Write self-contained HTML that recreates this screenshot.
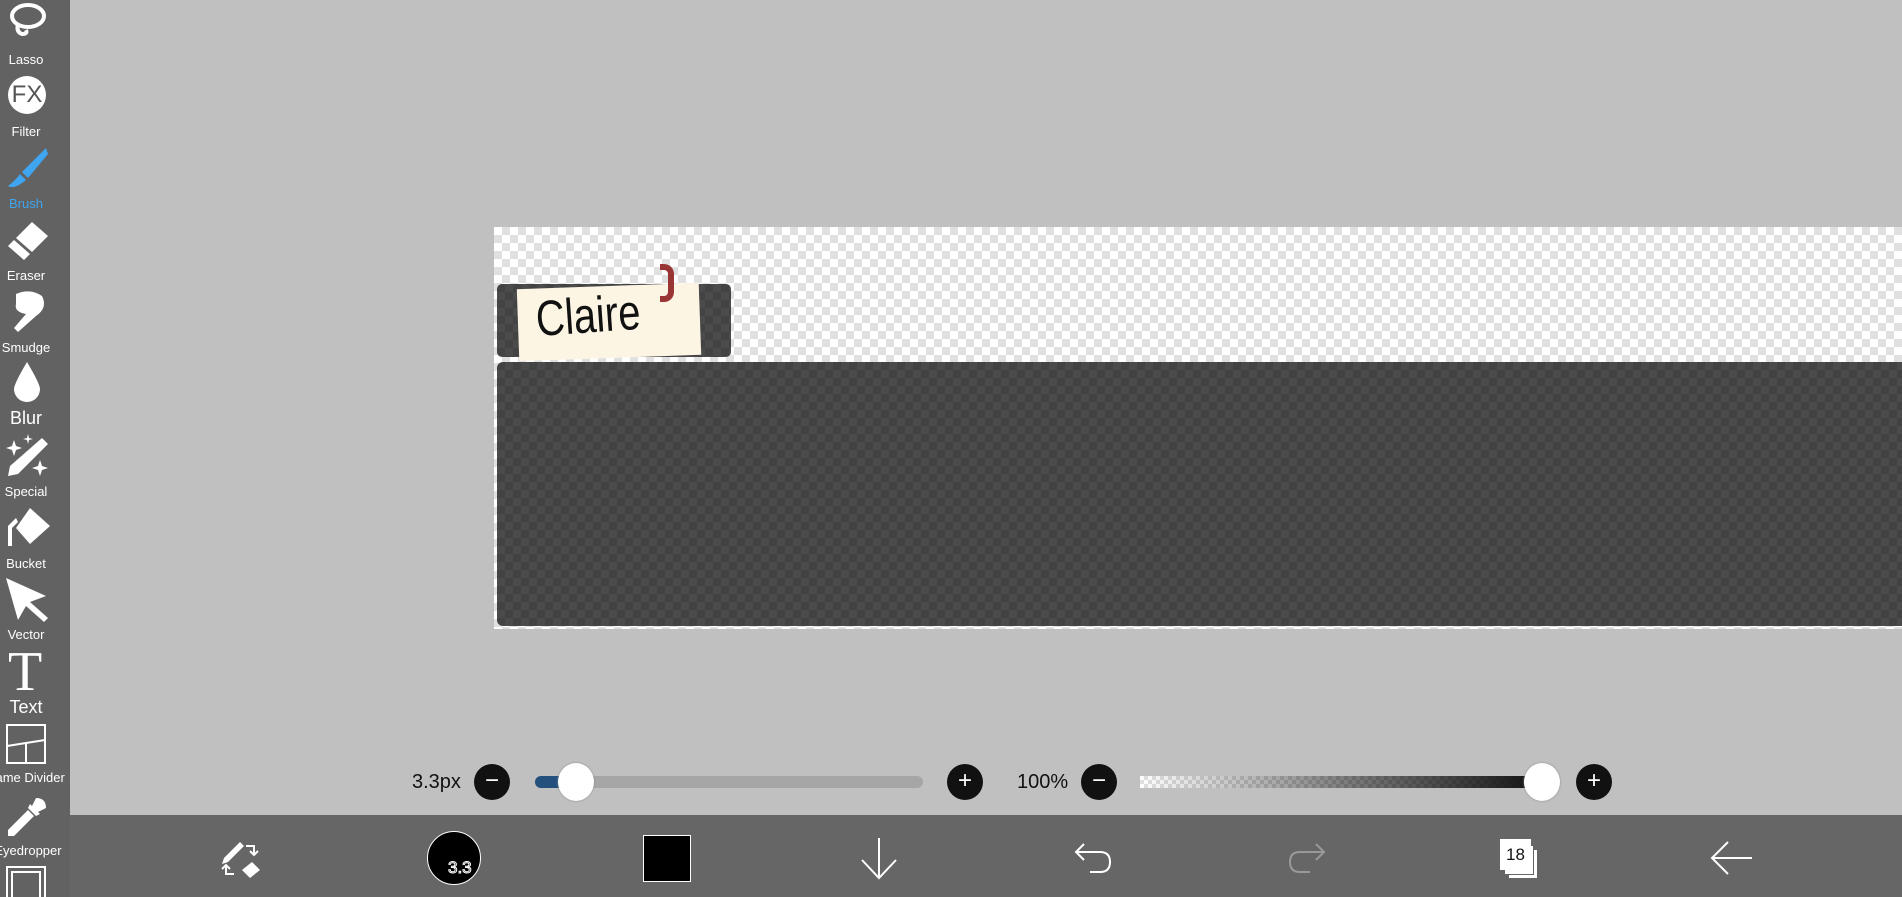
<!DOCTYPE html>
<html style="width:1902px;height:897px;overflow:hidden"><head><meta charset="utf-8"><style>
*{margin:0;padding:0;box-sizing:border-box}
body{width:1902px;height:897px;background:#c0c0c0;position:relative;overflow:hidden;font-family:"Liberation Sans",sans-serif}
.a{position:absolute}
#side{left:0;top:0;width:70px;height:897px;background:#626262;overflow:hidden}
.lbl{position:absolute;left:-19px;width:90px;text-align:center;color:#fff;font-size:13px;white-space:nowrap}
.chk{background-color:#fff;background-image:linear-gradient(45deg,#e0e0e0 25%,transparent 25%,transparent 75%,#e0e0e0 75%),linear-gradient(45deg,#e0e0e0 25%,transparent 25%,transparent 75%,#e0e0e0 75%);background-size:16px 16px;background-position:0 0,8px 8px}
.dk{background-color:#434343;background-image:linear-gradient(45deg,#4b4b4b 25%,transparent 25%,transparent 75%,#4b4b4b 75%),linear-gradient(45deg,#4b4b4b 25%,transparent 25%,transparent 75%,#4b4b4b 75%);background-size:16px 16px;background-position:0 0,8px 8px}
.btn{position:absolute;width:36px;height:36px;border-radius:50%;background:#111;color:#fff;text-align:center;line-height:34px;font-size:24px;top:764px}
.thumb{position:absolute;width:36px;height:38px;border-radius:50%;background:#fff;top:763px;box-shadow:0 0 2px #888}
.num{position:absolute;top:771px;font-size:20px;color:#111}
</style></head><body>
<div class="a chk" style="left:494px;top:227px;width:1408px;height:402px"></div>
<div class="a dk" style="left:497px;top:362px;width:1405px;height:264px;border-radius:6px 0 0 6px"></div>
<div class="a dk" style="left:497px;top:284px;width:234px;height:73px;border-radius:5px"></div>
<div class="a" style="left:518px;top:286px;width:182px;height:72px;background:#fdf5e4;transform:rotate(-2deg)"></div>
<div class="a" style="left:536px;top:290px;font-family:'Liberation Sans',sans-serif;font-size:50px;color:#111;transform:rotate(-4deg) scaleX(0.8);transform-origin:left center">Claire</div>
<div class="a" style="left:660px;top:264px;width:14px;height:38px;border:6px solid #9a3535;border-left:none;border-radius:0 10px 10px 0"></div>

<div class="a" id="side">
<svg class="a" style="left:6px;top:2px" width="40" height="36" viewBox="0 0 40 36"><ellipse cx="22" cy="14" rx="16" ry="11" fill="none" stroke="#fff" stroke-width="4"/><path d="M12 22 q-2 8 4 10 q6 0 4 -4" fill="none" stroke="#fff" stroke-width="4"/></svg>
<div class="lbl" style="top:52px">Lasso</div>
<div class="a" style="left:8px;top:76px;width:38px;height:38px;border-radius:50%;background:#fff;color:#555;font-size:24px;text-align:center;line-height:38px">FX</div>
<div class="lbl" style="top:124px">Filter</div>
<svg class="a" style="left:6px;top:146px" width="42" height="42" viewBox="0 0 42 42"><path d="M40 2 L16 26 L22 32 L42 8Z M14 28 L20 34 Q8 44 2 40 Q10 34 14 28Z" fill="#3fa5f0"/></svg>
<div class="lbl" style="top:196px;color:#3fa5f0">Brush</div>
<svg class="a" style="left:6px;top:220px" width="42" height="40" viewBox="0 0 42 40"><path d="M26 2 L42 16 L26 32 L10 18Z" fill="#fff"/><path d="M8 20 L24 34 L18 40 L2 26Z" fill="#fff"/></svg>
<div class="lbl" style="top:268px">Eraser</div>
<svg class="a" style="left:10px;top:290px" width="38" height="44" viewBox="0 0 38 44"><path d="M6 4 Q20 -2 32 6 Q38 18 26 26 L8 42 L4 38 L16 24 Q4 22 6 14 Z" fill="#fff"/></svg>
<div class="lbl" style="top:340px">Smudge</div>
<svg class="a" style="left:12px;top:362px" width="30" height="40" viewBox="0 0 30 40"><path d="M15 0 Q28 22 28 27 A13 13 0 0 1 2 27 Q2 22 15 0Z" fill="#fff"/></svg>
<div class="lbl" style="top:408px;font-size:18px">Blur</div>
<svg class="a" style="left:4px;top:434px" width="46" height="44" viewBox="0 0 46 44"><path d="M38 4 L44 10 L14 40 L4 42 L6 32Z" fill="#fff"/><path d="M10 6 l2 6 6 2 -6 2 -2 6 -2 -6 -6 -2 6 -2z M36 26 l2 6 6 2 -6 2 -2 6 -2 -6 -6 -2 6 -2z M24 0 l1 4 4 1 -4 1 -1 4 -1 -4 -4 -1 4 -1z" fill="#fff"/></svg>
<div class="lbl" style="top:484px">Special</div>
<svg class="a" style="left:4px;top:506px" width="46" height="42" viewBox="0 0 46 42"><path d="M26 2 L46 20 L26 38 L12 22Z" fill="#fff"/><path d="M12 12 L4 20 L4 40 L8 40 L8 22 L14 16Z" fill="#fff"/></svg>
<div class="lbl" style="top:556px">Bucket</div>
<svg class="a" style="left:6px;top:578px" width="42" height="44" viewBox="0 0 42 44"><path d="M0 0 L40 18 L24 24 L42 40 L38 44 L20 28 L12 42Z" fill="#fff"/></svg>
<div class="lbl" style="top:627px">Vector</div>
<div class="a" style="left:8px;top:644px;font-family:'Liberation Serif',serif;font-size:56px;color:#fff;line-height:56px">T</div>
<div class="lbl" style="top:697px;font-size:18px">Text</div>
<svg class="a" style="left:6px;top:724px" width="40" height="40" viewBox="0 0 40 40"><path d="M1 1 H39 V39 H1Z M1 22 L39 16 M20 19 V39" fill="none" stroke="#fff" stroke-width="2"/></svg>
<div class="lbl" style="top:770px;left:-21px">Frame Divider</div>
<svg class="a" style="left:6px;top:796px" width="42" height="42" viewBox="0 0 42 42"><path d="M30 2 Q40 2 40 12 L32 16 L26 10Z M24 8 L34 18 L30 20 L22 12Z M22 14 L28 20 L8 40 L2 40 L2 34Z" fill="#fff"/></svg>
<div class="lbl" style="top:843px;left:-17px">Eyedropper</div>
<div class="a" style="left:6px;top:866px;width:40px;height:40px;border:2px solid #fff"><div style="margin:3px;height:40px;border:2px solid #fff"></div></div>
</div>

<div class="num" style="left:412px">3.3px</div>
<div class="btn" style="left:474px">−</div>
<div class="a" style="left:535px;top:776px;width:388px;height:12px;border-radius:6px;background:#a6a6a6"></div>
<div class="a" style="left:535px;top:776px;width:40px;height:12px;border-radius:6px 0 0 6px;background:#24507e"></div>
<div class="thumb" style="left:558px"></div>
<div class="btn" style="left:947px">+</div>
<div class="num" style="left:1017px">100%</div>
<div class="btn" style="left:1081px">−</div>
<div class="a chk" style="left:1140px;top:776px;width:402px;height:12px;background-size:8px 8px;background-position:0 0,4px 4px"></div>
<div class="a" style="left:1140px;top:776px;width:402px;height:12px;background:linear-gradient(90deg,rgba(0,0,0,0),rgba(0,0,0,.5) 50%,#111)"></div>
<div class="thumb" style="left:1524px"></div>
<div class="btn" style="left:1576px">+</div>

<div class="a" style="left:70px;top:815px;width:1832px;height:82px;background:#666"></div>
<svg class="a" style="left:220px;top:838px" width="44" height="40" viewBox="0 0 44 40"><path d="M20 4 L24 8 L8 24 L2 26 L4 20Z" fill="#fff"/><path d="M32 24 L40 32 L30 40 L22 32Z" fill="#fff"/><path d="M26 8 H34 V16 M30 13 l4 4 4 -4 M14 36 H6 V28 M2 31 l4 -4 4 4" fill="none" stroke="#fff" stroke-width="2"/></svg>
<div class="a" style="left:427px;top:831px;width:54px;height:54px;border-radius:50%;background:#000;border:1px solid #fff"></div>
<div class="a" style="left:448px;top:858px;color:#000;font-size:17px;-webkit-text-stroke:1px #fff">3.3</div>
<div class="a" style="left:643px;top:835px;width:48px;height:47px;background:#000;border:1px solid #fff"></div>
<svg class="a" style="left:860px;top:836px" width="38" height="44" viewBox="0 0 38 44"><path d="M19 2 V42 M2 24 L19 42 L36 24" fill="none" stroke="#fff" stroke-width="2"/></svg>
<svg class="a" style="left:1074px;top:842px" width="40" height="32" viewBox="0 0 40 32"><path d="M10 2 L2 10 L10 18 M2 10 H26 Q36 10 36 20 Q36 30 26 30 H16" fill="none" stroke="#fff" stroke-width="2"/></svg>
<svg class="a" style="left:1286px;top:842px" width="40" height="32" viewBox="0 0 40 32"><path d="M30 2 L38 10 L30 18 M38 10 H14 Q4 10 4 20 Q4 30 14 30 H24" fill="none" stroke="#999" stroke-width="2"/></svg>
<div class="a" style="left:1508px;top:849px;width:30px;height:30px;background:#fff;border:1px solid #666"></div>
<div class="a" style="left:1504px;top:845px;width:30px;height:30px;background:#fff;border:1px solid #666"></div>
<div class="a" style="left:1500px;top:839px;width:31px;height:31px;background:#fff;text-align:center;line-height:31px;font-size:17px;color:#111">18</div>
<svg class="a" style="left:1710px;top:840px" width="44" height="36" viewBox="0 0 44 36"><path d="M18 2 L2 18 L18 34 M2 18 H42" fill="none" stroke="#fff" stroke-width="2"/></svg>
</body></html>
